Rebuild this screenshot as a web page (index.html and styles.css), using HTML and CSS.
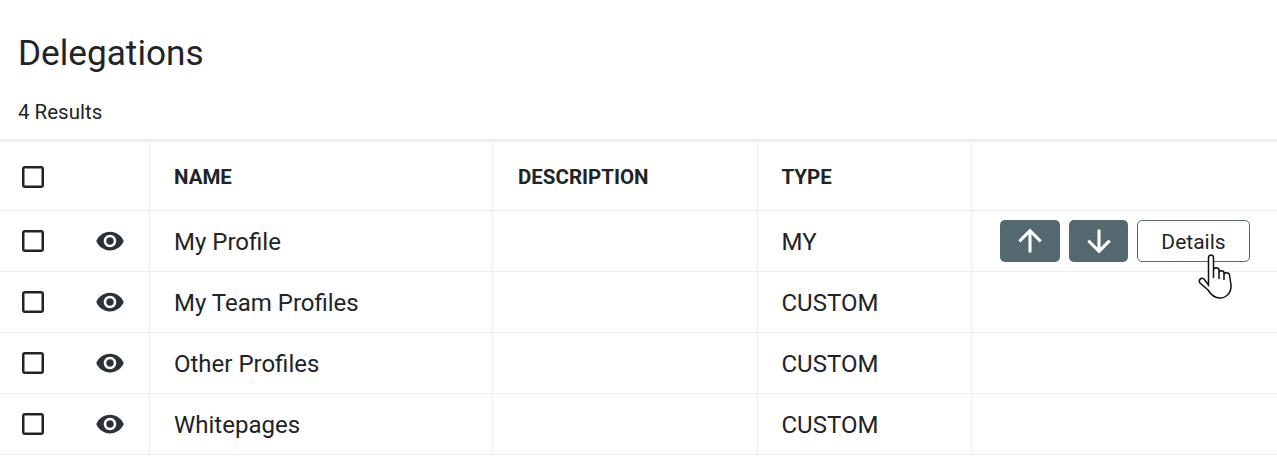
FILE: index.html
```html
<!DOCTYPE html>
<html lang="en">
<head>
    <meta charset="UTF-8">
    <title>Delegations</title>
    <link rel="stylesheet" href="styles.css">
</head>
<body>
    <svg class="icon-defs" width="0" height="0">
        <symbol id="eye" viewBox="0 0 24 24">
            <path d="M12 4.5C7 4.5 2.73 7.61 1 12c1.73 4.39 6 7.5 11 7.5s9.27-3.11 11-7.5c-1.73-4.39-6-7.5-11-7.5zM12 17c-2.76 0-5-2.24-5-5s2.24-5 5-5 5 2.24 5 5-2.24 5-5 5zm0-8c-1.66 0-3 1.34-3 3s1.34 3 3 3 3-1.34 3-3-1.34-3-3-3z"/>
        </symbol>
    </svg>

    <h1>Delegations</h1>
    <div class="results">4 Results</div>

    <table class="grid">
        <colgroup>
            <col class="col-check">
            <col class="col-view">
            <col class="col-name">
            <col class="col-desc">
            <col class="col-type">
            <col>
        </colgroup>
        <thead>
            <tr>
                <th class="cell-check"><span class="checkbox"></span></th>
                <th></th>
                <th>NAME</th>
                <th class="cell-desc">DESCRIPTION</th>
                <th class="cell-type">TYPE</th>
                <th></th>
            </tr>
        </thead>
        <tbody>
            <tr>
                <td class="cell-check"><span class="checkbox"></span></td>
                <td class="cell-view"><svg class="eye"><use href="#eye"/></svg></td>
                <td>My Profile</td>
                <td></td>
                <td class="cell-type">MY</td>
                <td class="cell-actions">
                    <div class="actions">
                        <button class="btn-move btn-up">
                            <svg viewBox="0 0 24 24"><path d="M12 20.600V4.500M4 12.300 12 4.300l8 8"/></svg>
                        </button>
                        <button class="btn-move btn-down">
                            <svg viewBox="0 0 24 24"><path d="M12 3.400v16.100M4 11.700l8 8 8-8"/></svg>
                        </button>
                        <button class="btn-details">Details</button>
                    </div>
                    <svg class="cursor" viewBox="0 0 40 52">
                        <path d="M13.500 35V8c0-4 5-4 5 0v12c0-3 5.500-3 5.500 0v3c0-3 5-3 5 0v2c0-3 5-3 5.500 0L36 35c.5 7-4 13-11 13-6 0-9-3-12-8l-8-7c-2-3 1-6 4-4zM18.500 20v8M24 23v6M29 25v5"/>
                    </svg>
                </td>
            </tr>
            <tr>
                <td class="cell-check"><span class="checkbox"></span></td>
                <td class="cell-view"><svg class="eye"><use href="#eye"/></svg></td>
                <td>My Team Profiles</td>
                <td></td>
                <td class="cell-type">CUSTOM</td>
                <td></td>
            </tr>
            <tr>
                <td class="cell-check"><span class="checkbox"></span></td>
                <td class="cell-view"><svg class="eye"><use href="#eye"/></svg></td>
                <td>Other Profiles</td>
                <td></td>
                <td class="cell-type">CUSTOM</td>
                <td></td>
            </tr>
            <tr>
                <td class="cell-check"><span class="checkbox"></span></td>
                <td class="cell-view"><svg class="eye"><use href="#eye"/></svg></td>
                <td>Whitepages</td>
                <td></td>
                <td class="cell-type">CUSTOM</td>
                <td></td>
            </tr>
        </tbody>
    </table>
</body>
</html>
```

FILE: styles.css
```css
body {
    margin: 0;
    background-color: #fff;
    color: #212427;
    font-family: Roboto, Arial, sans-serif;
    overflow: hidden;
}
.icon-defs {
    position: absolute;
}
h1 {
    margin: 0;
    padding: 33px 0 0 18px;
    font-size: 35.200px;
    line-height: 40px;
    font-weight: 400;
}
.results {
    padding: 27px 0 0 18px;
    height: 39px;
    font-size: 20.500px;
    line-height: 24px;
}
.grid {
    width: 100%;
    table-layout: fixed;
    border-collapse: separate;
    border-spacing: 0;
    border-top: 3px solid #eeeeee;
}
.col-check {
    width: 66px;
}
.col-view {
    width: 84px;
}
.col-name {
    width: 343px;
}
.col-desc {
    width: 265px;
}
.col-type {
    width: 214px;
}
th, td {
    padding: 2px 0 0 24px;
    border-bottom: 1px solid #eeeeee;
    text-align: left;
    box-sizing: border-box;
}
th {
    height: 69px;
    font-size: 20.500px;
    font-weight: 700;
}
td {
    height: 61px;
    font-size: 24px;
}
th:nth-child(n+2):not(:last-child), td:nth-child(n+2):not(:last-child) {
    border-right: 1px solid #eeeeee;
}
th.cell-desc {
    padding-left: 25px;
}
.cell-type {
    padding-left: 23.500px;
}
.cell-check {
    padding-left: 22px;
}
.cell-view {
    padding-left: 29px;
    padding-top: 0;
}
.checkbox {
    display: block;
    width: 22px;
    height: 22px;
    box-sizing: border-box;
    border: 2px solid #212427;
    box-shadow: inset 0 0 0 0.500px #212427;
    border-radius: 3px;
}
td.cell-check {
    padding-top: 0;
}
.eye {
    display: block;
    width: 30px;
    height: 30px;
    fill: #2b3338;
}
.cell-actions {
    position: relative;
    padding: 0 0 0 28px;
}
.actions {
    display: flex;
    gap: 9px;
}
.actions button {
    height: 42px;
    padding: 0;
    box-sizing: border-box;
    border-radius: 5px;
    font-family: inherit;
}
.btn-move {
    border: none;
    background-color: #53686f;
    display: flex;
    align-items: center;
    justify-content: center;
}
.btn-up {
    width: 60px;
}
.btn-down {
    width: 59px;
}
.btn-move svg {
    width: 32px;
    height: 32px;
    fill: none;
    stroke: #fff;
    stroke-width: 2.300;
}
.actions .btn-details {
    width: 113px;
    border: 1px solid #53686f;
    background-color: #fff;
    color: #212427;
    font-size: 21px;
    padding-top: 2px;
}
.cursor {
    position: absolute;
    left: 223px;
    top: 39px;
    width: 40px;
    height: 52px;
    fill: #fff;
    stroke: #111;
    stroke-width: 1.500;
}
```
